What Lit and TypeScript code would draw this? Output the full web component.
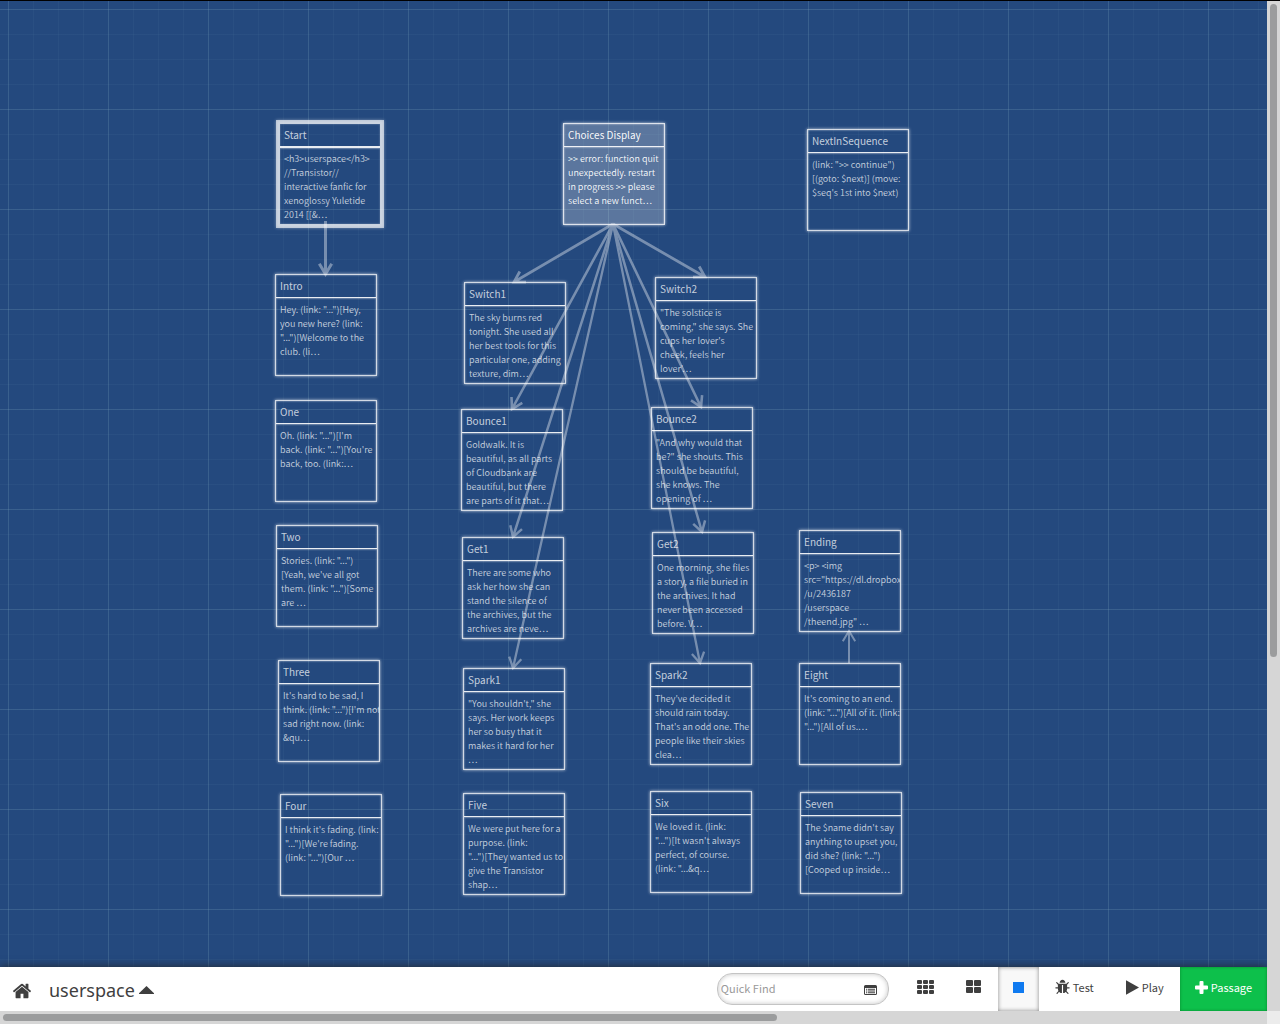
import { LitElement, html, css, svg } from "lit";
import { customElement, property } from "lit/decorators.js";

interface Passage {
  name: string;
  x: number;
  y: number;
  excerpt: string;
  kind?: "start" | "selected";
}

const PASSAGES: Passage[] = [
  { name: "Start", x: 279, y: 122, kind: "start", excerpt: "<h3>userspace</h3>\n//Transistor//\ninteractive fanfic for\nxenoglossy Yuletide\n2014 [[&…" },
  { name: "Choices Display", x: 563, y: 122, kind: "selected", excerpt: ">> error: function quit\nunexpectedly. restart\nin progress >> please\nselect a new funct…" },
  { name: "NextInSequence", x: 807, y: 128, excerpt: "(link: \">> continue\")\n[(goto: $next)] (move:\n$seq's 1st into $next)" },
  { name: "Intro", x: 275, y: 273, excerpt: "Hey. (link: \"...\")[Hey,\nyou new here? (link:\n\"...\")[Welcome to the\nclub. (li…" },
  { name: "Switch1", x: 464, y: 281, excerpt: "The sky burns red\ntonight. She used all\nher best tools for this\nparticular one, adding\ntexture, dim…" },
  { name: "Switch2", x: 655, y: 276, excerpt: "\"The solstice is\ncoming,\" she says. She\ncups her lover's\ncheek, feels her\nlover'…" },
  { name: "One", x: 275, y: 399, excerpt: "Oh. (link: \"...\")[I'm\nback. (link: \"...\")[You're\nback, too. (link:…" },
  { name: "Bounce1", x: 461, y: 408, excerpt: "Goldwalk. It is\nbeautiful, as all parts\nof Cloudbank are\nbeautiful, but there\nare parts of it that…" },
  { name: "Bounce2", x: 651, y: 406, excerpt: "\"And why would that\nbe?\" she shouts. This\nshould be beautiful,\nshe knows. The\nopening of …" },
  { name: "Two", x: 276, y: 524, excerpt: "Stories. (link: \"...\")\n[Yeah, we've all got\nthem. (link: \"...\")[Some\nare …" },
  { name: "Get1", x: 462, y: 536, excerpt: "There are some who\nask her how she can\nstand the silence of\nthe archives, but the\narchives are neve…" },
  { name: "Get2", x: 652, y: 531, excerpt: "One morning, she files\na story, a file buried in\nthe archives. It had\nnever been accessed\nbefore. V…" },
  { name: "Ending", x: 799, y: 529, excerpt: "<p> <img\nsrc=\"https://dl.dropbox\n/u/2436187\n/userspace\n/theend.jpg\" …" },
  { name: "Three", x: 278, y: 659, excerpt: "It's hard to be sad, I\nthink. (link: \"...\")[I'm not\nsad right now. (link:\n&qu…" },
  { name: "Spark1", x: 463, y: 667, excerpt: "\"You shouldn't,\" she\nsays. Her work keeps\nher so busy that it\nmakes it hard for her\n…" },
  { name: "Spark2", x: 650, y: 662, excerpt: "They've decided it\nshould rain today.\nThat's an odd one. The\npeople like their skies\nclea…" },
  { name: "Eight", x: 799, y: 662, excerpt: "It's coming to an end.\n(link: \"...\")[All of it. (link:\n\"...\")[All of us.…" },
  { name: "Four", x: 280, y: 793, excerpt: "I think it's fading. (link:\n\"...\")[We're fading.\n(link: \"...\")[Our …" },
  { name: "Five", x: 463, y: 792, excerpt: "We were put here for a\npurpose. (link:\n\"...\")[They wanted us to\ngive the Transistor\nshap…" },
  { name: "Six", x: 650, y: 790, excerpt: "We loved it. (link:\n\"...\")[It wasn't always\nperfect, of course.\n(link: \"...&q…" },
  { name: "Seven", x: 800, y: 791, excerpt: "The $name didn't say\nanything to upset you,\ndid she? (link: \"...\")\n[Cooped up inside…" },
];

// Link arrows as x1, y1, x2, y2, stroke width, in stage coordinates.
const LINKS: number[][] = [
  [325.5, 220, 325.5, 273, 3],
  [613, 223, 514, 281, 2.8],
  [613, 223, 512, 408, 2.6],
  [613, 223, 513, 536, 2.5],
  [613, 223, 513, 667, 2.3],
  [613, 223, 705, 276, 2.8],
  [613, 223, 701, 406, 2.6],
  [613, 223, 702, 531, 2.5],
  [613, 223, 700, 662, 2.3],
  [849, 662, 849, 630, 2],
];

@customElement("passage-card")
class PassageCard extends LitElement {
  @property() name = "";
  @property() excerpt = "";
  @property({ reflect: true }) kind = "";

  static styles = css`
    :host {
      display: block;
      box-sizing: border-box;
      width: 102px;
      height: 102px;
      overflow: hidden;
      border: 1px solid rgba(255, 255, 255, 0.8);
      box-shadow: 0 0 3px rgba(255, 255, 255, 0.75), inset 0 0 2px rgba(255, 255, 255, 0.75);
      color: rgba(255, 255, 255, 0.74);
    }
    :host([kind="start"]) {
      border-color: rgba(255, 255, 255, 0.76);
      outline: 3px solid rgba(255, 255, 255, 0.62);
      box-shadow: 0 0 3px 3px rgba(255, 255, 255, 0.4), inset 0 0 2px rgba(255, 255, 255, 0.4);
    }
    :host([kind="selected"]) {
      background: rgba(255, 255, 255, 0.25);
      color: rgba(255, 255, 255, 0.96);
    }
    .name {
      box-sizing: border-box;
      margin: 0;
      padding: 0 4px;
      height: 23px;
      border-bottom: 1px solid rgba(255, 255, 255, 0.9);
      box-shadow: 0 0 2px rgba(255, 255, 255, 0.9);
      font-size: 10px;
      font-weight: 400;
      line-height: 21px;
      white-space: nowrap;
    }
    :host([kind="start"]) .name {
      height: 24px;
      margin-bottom: -1px;
      border-bottom-width: 2px;
    }
    .excerpt {
      margin: 0;
      padding: 5px 4px;
      font-size: 9px;
      font-weight: 350;
      line-height: 14px;
      white-space: pre;
    }
  `;

  render() {
    return html`<h2 class="name">${this.name}</h2>
      <p class="excerpt">${this.excerpt}</p>`;
  }
}

@customElement("story-map")
class StoryMap extends LitElement {
  static styles = css`
    :host {
      display: block;
      position: relative;
      overflow: hidden;
      background-color: #24497e;
      background-image: linear-gradient(90deg, rgba(130, 170, 190, 0.18) 1px, transparent 1px),
        linear-gradient(rgba(130, 170, 190, 0.18) 1px, transparent 1px),
        linear-gradient(90deg, rgba(130, 170, 190, 0.06) 1px, transparent 1px),
        linear-gradient(rgba(130, 170, 190, 0.06) 1px, transparent 1px);
      background-size: 100px 100px, 100px 100px, 25px 25px, 25px 25px;
      background-position: 8px 8px;
    }
    passage-card {
      position: absolute;
    }
    .links {
      position: absolute;
      left: 0;
      top: 0;
      width: 100%;
      height: 100%;
      opacity: 0.38;
      pointer-events: none;
    }
    .link {
      fill: none;
      stroke: #fff;
    }
  `;

  private arrow([x1, y1, x2, y2, width]: number[]) {
    const back = Math.atan2(y1 - y2, x1 - x2);
    const arm = (turn: number) =>
      `${(x2 + 12 * Math.cos(back + turn)).toFixed(1)} ${(y2 + 12 * Math.sin(back + turn)).toFixed(1)}`;
    return svg`<path class="link" stroke-width=${width}
      d="M${x1} ${y1}L${x2} ${y2}M${arm(0.54)}L${x2} ${y2}L${arm(-0.54)}"></path>`;
  }

  render() {
    return html`${PASSAGES.map(
        (p) => html`<passage-card
          .name=${p.name}
          .excerpt=${p.excerpt}
          .kind=${p.kind ?? ""}
          style="left:${p.x}px;top:${p.y}px"
        ></passage-card>`
      )}
      <svg class="links" aria-hidden="true">${LINKS.map((l) => this.arrow(l))}</svg>`;
  }
}

const icon = (name: string, w: number, h: number, viewBox: string, body: unknown) =>
  html`<svg class="icon ${name}" width=${w} height=${h} viewBox=${viewBox} aria-hidden="true">${body}</svg>`;

const tiles = (columns: number, rows: number, w: number, h: number, dx: number, dy: number) =>
  Array.from({ length: columns * rows }, (_, i) =>
    svg`<rect x=${(i % columns) * dx} y=${Math.floor(i / columns) * dy} width=${w} height=${h} rx="1"></rect>`
  );

const HOME = svg`<path d="M1472 992v480q0 26-19 45t-45 19h-384v-384h-256v384h-384q-26 0-45-19t-19-45v-480q0-1 .5-3t.5-3l575-474 575 474q1 2 1 6zm223-69l-62 74q-8 9-21 11h-3q-13 0-21-7l-692-577-692 577q-12 8-24 7-13-2-21-11l-62-74q-8-10-7-23.5t11-21.5l719-599q32-26 76-26t76 26l244 204v-195q0-14 9-23t23-9h192q14 0 23 9t9 23v408l219 182q10 8 11 21.5t-7 23.5z"></path>`;
const BUG = svg`<path d="M1696 960q0 26-19 45t-45 19h-224q0 171-67 290l208 209q19 19 19 45t-19 45q-18 19-45 19t-45-19l-198-197q-5 5-15 13t-42 28.5-65 36.5-82 29-97 13v-896h-128v896q-51 0-101.500-13.500t-87-33-66-39-43.500-32.500l-15-14-183 207q-20 21-48 21-24 0-43-16-19-18-20.500-44.500t15.500-46.500l202-227q-58-114-58-274h-224q-26 0-45-19t-19-45 19-45 45-19h224v-294l-173-173q-19-19-19-45t19-45 45-19 45 19l173 173h844l173-173q19-19 45-19t45 19 19 45-19 45l-173 173v294h224q26 0 45 19t19 45zm-480-576h-640q0-133 93.500-226.500t226.500-93.500 226.500 93.500 93.500 226.500z"></path>`;
const LIST = svg`<path fill-rule="evenodd" d="M1.500 0h10q1.500 0 1.500 1.500v7q0 1.500-1.500 1.500h-10q-1.500 0-1.500-1.500v-7q0-1.500 1.500-1.500zM1 3v5.500q0 .5.5.5h10q.5 0 .5-.5v-5.500zM2 3.700h1.300v1h-1.300zM4 3.700h7v1h-7zM2 5.500h1.300v1h-1.300zM4 5.500h7v1h-7zM2 7.200h1.300v1h-1.300zM4 7.200h7v1h-7z"></path>`;

@customElement("story-toolbar")
class StoryToolbar extends LitElement {
  static styles = css`
    :host {
      display: flex;
      align-items: stretch;
      position: relative;
      height: 44px;
      background: #fff;
      color: #3f3f3f;
      box-shadow: 0 0 8px rgba(34, 34, 34, 0.9);
    }
    .left,
    .right,
    .modes {
      display: flex;
      align-items: stretch;
    }
    .right {
      margin-left: auto;
    }
    .home {
      display: flex;
      align-items: center;
      padding: 4px 12px 0;
      color: inherit;
    }
    button {
      display: flex;
      align-items: center;
      gap: 3px;
      margin: 0;
      padding: 0 16px 4px;
      border: 0;
      background: none;
      color: inherit;
      font: inherit;
      font-size: 11px;
      white-space: nowrap;
    }
    .story {
      gap: 4px;
      padding: 2px 5px 0;
      font-family: "Noto Sans", "Open Sans", sans-serif;
      font-size: 18px;
    }
    .icon {
      display: block;
      flex: none;
      fill: currentColor;
    }
    .search {
      display: flex;
      align-items: center;
      box-sizing: border-box;
      width: 172px;
      height: 32px;
      margin: 6px 12px 0 0;
      padding: 0 11px 0 3px;
      border: 1px solid #c4c4c4;
      border-radius: 15px;
      box-shadow: inset 0 0 5px rgba(0, 0, 0, 0.24);
    }
    .search input {
      flex: 1;
      min-width: 0;
      padding: 0 0 2px;
      border: 0;
      outline: 0;
      background: none;
      color: #3f3f3f;
      font: inherit;
      font-size: 11px;
      line-height: 18px;
    }
    .search input::placeholder {
      color: #999;
      opacity: 1;
    }
    .search button {
      padding: 2px 0 0;
    }
    .modes .active {
      background: #f8f8f8;
      color: #0f7af0;
      padding: 0 15px 4px;
      box-shadow: inset 0 0 4px rgba(0, 0, 0, 0.45);
    }
    .create {
      padding: 0 15px 4px;
      background: #0dc04b;
      color: #fff;
      box-shadow: inset 0 0 3px rgba(0, 80, 20, 0.5);
    }
  `;

  render() {
    return html`
      <div class="left">
        <a class="home" href="#stories" aria-label="Go to the story list">
          ${icon("house", 20, 20, "0 0 1792 1792", HOME)}
        </a>
        <button class="story" type="button">
          userspace ${icon("caret", 15, 8, "0 0 15 8", svg`<path d="M7.500 0L15 7.200V8H0V7.200z"></path>`)}
        </button>
      </div>
      <div class="right">
        <div class="search">
          <input type="text" placeholder="Quick Find" aria-label="Quick Find" />
          <button type="button" aria-label="Find and replace">${icon("list", 13, 10, "0 0 13 10", LIST)}</button>
        </div>
        <div class="modes">
          <button type="button" aria-label="Show only story structure">
            ${icon("small", 17, 14, "0 0 17 14", tiles(3, 3, 5, 4, 6, 5))}
          </button>
          <button type="button" aria-label="Show passage titles">
            ${icon("medium", 16, 14, "0 0 16 14", tiles(2, 2, 7, 6, 8, 7))}
          </button>
          <button class="active" type="button" aria-label="Show passage titles and excerpts">
            ${icon("large", 11, 11, "0 0 11 11", svg`<rect width="11" height="11"></rect>`)}
          </button>
        </div>
        <button type="button">${icon("bug", 15, 16, "64 0 1664 1728", BUG)} Test</button>
        <button type="button">${icon("play", 13, 15, "0 0 13 15", svg`<path d="M0 .3L13 7.500L0 14.700z"></path>`)} Play</button>
        <button class="create" type="button">
          ${icon("plus", 13, 13, "0 0 13 13", svg`<path d="M5.500 0h2q1 0 1 1v3.500h3.500q1 0 1 1v2q0 1-1 1h-3.500v3.500q0 1-1 1h-2q-1 0-1-1v-3.500h-3.500q-1 0-1-1v-2q0-1 1-1h3.500v-3.500q0-1 1-1z"></path>`)}
          Passage
        </button>
      </div>
    `;
  }
}

@customElement("app-root")
class AppRoot extends LitElement {
  static styles = css`
    :host {
      display: grid;
      grid-template-columns: minmax(0, 1fr) 13px;
      grid-template-rows: minmax(0, 1fr) 13px;
      box-sizing: border-box;
      height: 100vh;
      border-top: 1px solid #000;
      background: #ececec;
      font-family: "Noto Sans CJK SC", "Noto Sans", sans-serif;
    }
    .page {
      display: flex;
      flex-direction: column;
      overflow: hidden;
    }
    story-map {
      flex: 1;
      min-height: 0;
    }
    .track {
      display: flex;
      padding: 3px;
      background: #d6d6d6;
    }
    .vertical {
      flex-direction: column;
    }
    .thumb {
      border-radius: 4px;
      background: #9b9c9d;
    }
    .vertical .thumb {
      height: 65%;
    }
    .horizontal .thumb {
      width: 61.4%;
    }
  `;

  render() {
    return html`
      <main class="page">
        <story-map></story-map>
        <story-toolbar></story-toolbar>
      </main>
      <div class="track vertical"><div class="thumb"></div></div>
      <div class="track horizontal"><div class="thumb"></div></div>
    `;
  }
}
